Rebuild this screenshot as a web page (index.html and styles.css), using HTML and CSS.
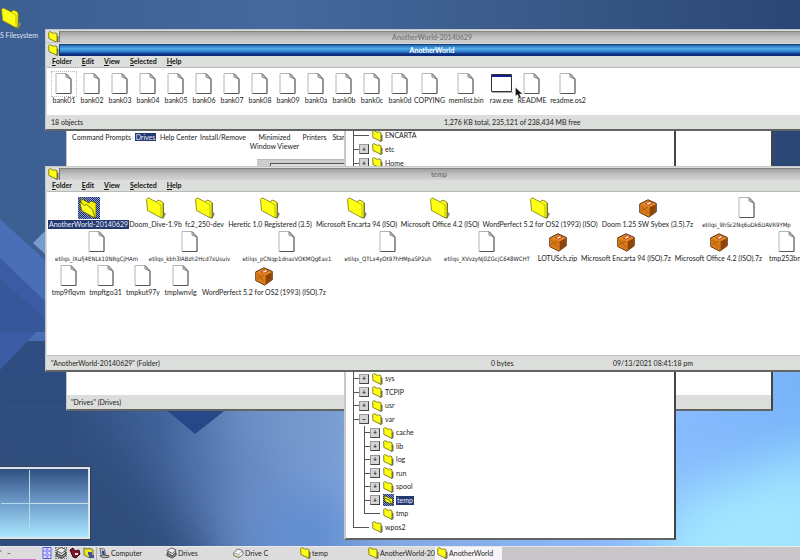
FILE: index.html
```html
<!DOCTYPE html>
<html lang="en">
<head>
<meta charset="utf-8">
<title>Desktop</title>
<link rel="stylesheet" href="styles.css">
</head>
<body>
<svg class="defs" aria-hidden="true">
  <defs>
    <pattern id="hatch" width="2" height="2" patternUnits="userSpaceOnUse"><path fill="#8f9cc8" d="M0 0h2v2H0z"/><path fill="#1c2f74" d="M0 0h1v1H0zM1 1h1v1H1z"/></pattern>
    <symbol id="folder" viewBox="0 0 22 22">
      <path fill="#8c8c86" d="M17 13l4 4-3 5-5-3z"/>
      <path fill="#77773a" d="M16 5l3 1v15l-3-1z"/>
      <path fill="#ffff14" stroke="#77771c" stroke-width=".8" d="M1.500 2.500L3 .8l8.500 4.200 1.500-2 4 1.500 1 2V20l-2 .8L2.500 13.500z"/>
      <path fill="none" stroke="#a2a200" stroke-width=".7" d="M11.500 5.500l4.500 2.300V20"/>
    </symbol>
    <symbol id="folder-open" viewBox="0 0 22 22">
      <path fill="url(#hatch)" d="M0 0h22v22H0z"/>
      <path fill="#f4f400" stroke="#55551c" stroke-width=".8" d="M3 1.500l8 4.500 2-2 5 2v14l-2 1L3 13z"/>
      <path fill="#ffff20" stroke="#55551c" stroke-width=".8" d="M1.500 4.500l5 4 2-1 6 5 2.500 8.500-13-7z"/>
    </symbol>
    <symbol id="file" viewBox="0 0 17 22">
      <path fill="#fff" stroke="#b4b4b4" d="M.5.5h10l5 5v15H.5z"/>
      <path fill="none" stroke="#555" d="M10.500.5l5 5.500v14.500H1"/>
      <path fill="#ddd" stroke="#888" d="M10.500 1v3l4.500 2z"/>
    </symbol>
    <symbol id="box" viewBox="-2 -2 24 24">
      <path fill="#e08a24" stroke="#4c2408" d="M1 5.500L10 1l9 4v9l-8 6-10-5z"/>
      <path fill="#8e4308" d="M11.500 9.500L18.500 6v8l-7 5z"/>
      <path fill="#d87a18" d="M1.500 6l10 3.500v10l-10-5z"/>
      <path fill="none" stroke="#9a5010" stroke-width=".7" d="M2 13l8-4M3 8l7 8M12 15l6-5"/>
      <path fill="#fff0cc" stroke="#c23818" d="M7 5.500l5-2.500 3 1.500-5 2.500z"/>
    </symbol>
    <symbol id="program" viewBox="0 0 22 20">
      <path fill="#fff" stroke="#333" d="M.5.5h20v17H.5z"/>
      <path fill="#141c98" d="M1 1h19v2H1z"/>
      <path fill="#aaa" d="M1 18h21v1H1z"/>
    </symbol>
    <symbol id="mini" viewBox="0 0 11 12">
      <path fill="#77776a" d="M8 4l2.500 1v6l-2 1-2-2z"/>
      <path fill="#ffff10" stroke="#66661c" stroke-width=".8" d="M.7 1.500l1-1 4 2 1-.7 2.300 1v8.500L.9 7.500z"/>
    </symbol>
    <symbol id="mini-open" viewBox="0 0 11 12">
      <path fill="url(#hatch)" d="M0 0h11v12H0z"/>
      <path fill="#ffff10" stroke="#44441c" stroke-width=".8" d="M1 3l1.500-1 4 2 3 .5v6L2 7.500zM2 4l5 2.500 2 4"/>
    </symbol>
    <symbol id="disk" viewBox="0 0 12 12">
      <path fill="#888" stroke="#444" d="M1 7v2l6 2.500 4-3V6z"/>
      <path fill="#ddd" stroke="#444" d="M1 6l5-3 5 2-4 4z"/>
      <path fill="#eee" stroke="#555" d="M1 3.500l5-3 5 2-4 4z"/>
    </symbol>
    <symbol id="drive" viewBox="0 0 12 12">
      <path fill="#eee" stroke="#666" d="M.7 6L5 1.500 10 3l1.300 4L7 11 1 9z"/>
      <path fill="#fff" stroke="#999" d="M1 6l5 1.500L10 3M6 7.500L7 11"/>
      <path fill="#d6d630" d="M2 8l3 1v1l-3-1z"/>
    </symbol>
    <symbol id="computer" viewBox="0 0 12 12">
      <path fill="#eee" stroke="#555" d="M1 1l5 1 1 6-5-1z"/>
      <path fill="#263c9a" d="M3 3l3 1v4L3 6z"/>
      <path fill="#bbb" stroke="#444" d="M1 9l3-1 7 1-1 2H4z"/>
    </symbol>
    <symbol id="drawers" viewBox="0 0 9 12">
      <path fill="#eef" stroke="#5555e8" d="M.5.5h8v11h-8zM1 4h7M1 8h7M3 2h3M3 6h3M3 10h3"/>
    </symbol>
    <symbol id="bug" viewBox="0 0 12 12">
      <path fill="#8c1226" stroke="#301018" d="M1 3l3-2 2 3 4-1 1 4-4 4-3-1z"/>
      <path fill="#eee" d="M6 6h3v2H6z"/>
    </symbol>
    <symbol id="shared" viewBox="0 0 12 12">
      <path fill="#e8e820" stroke="#55551c" stroke-width=".8" d="M1 1l4 1 1-1 4 2v7l-3 1-6-3z"/>
      <path fill="#4a4e9c" d="M5 5h4v3H5zM6 8h5v3H6z"/>
    </symbol>
  </defs>
</svg>

<main class="desktop">
  <svg class="wallpaper" viewBox="0 0 800 560" preserveAspectRatio="none" aria-hidden="true">
    <defs>
      <linearGradient id="sky" x1="0" y1="0" x2="1" y2="0"><stop offset="0" stop-color="#3c5f92"/><stop offset=".35" stop-color="#44699e"/><stop offset=".7" stop-color="#385887"/><stop offset="1" stop-color="#2a4674"/></linearGradient>
      <linearGradient id="floor" x1="0" y1="0" x2="1" y2="0"><stop offset=".08" stop-color="#2f4d80"/><stop offset=".2" stop-color="#41639a"/><stop offset=".3" stop-color="#6485be"/><stop offset=".43" stop-color="#7fa4dc"/><stop offset=".8" stop-color="#8dbcff"/><stop offset="1" stop-color="#78b4fa"/></linearGradient>
      <filter id="soft" x="-50%" y="-50%" width="200%" height="200%"><feGaussianBlur stdDeviation="26"/></filter>
    </defs>
    <path fill="url(#sky)" d="M0 0h800v300H0z"/>
    <path fill="url(#floor)" d="M0 290h800v270H0z"/>
    <g filter="url(#soft)">
      <path fill="#2f4d7c" d="M-40 440h150l130 160H-40z"/>
      <path fill="#7697cb" d="M210 400h130v70z"/>
      <path fill="#5d8cd2" d="M270 500h80v70H250z"/>
      <path fill="#a2e6ff" d="M670 500l170-60v160H640z"/>
    </g>
    <path fill="#4a6fb6" d="M0 219l46 42v80H0z"/>
    <path fill="#3b5ba4" d="M0 258l46 44v20L0 370z"/>
    <path fill="#36589a" d="M0 278l46 42v12H0z"/>
    <path fill="#789bd2" d="M33 243l13-13v25z"/>
    <path fill="#264788" d="M164 408h64l-33 26z"/>
  </svg>

  <div class="desk-icon"><svg><use href="#folder"/></svg><span>S Filesystem</span></div>

  <section class="window drives">
    <div class="items drive-items">
      <span>Command Prompts</span><span><b class="picked">Drives</b></span><span>Help Center</span><span>Install/Remove</span><span>Minimized<br>Window Viewer</span><span>Printers</span><span>Star</span>
    </div>
    <div class="viewer"><i></i></div>
    <footer class="status">"Drives" (Drives)</footer>
  </section>

  <section class="window tree">
    <ul>
      <li><i class="rail long"></i><svg><use href="#mini"/></svg><span>ENCARTA</span></li>
      <li><i class="rail"></i><button aria-label="Expand etc">+</button><svg><use href="#mini"/></svg><span>etc</span></li>
      <li><i class="rail"></i><button aria-label="Expand Home">+</button><svg><use href="#mini"/></svg><span>Home</span></li>
    </ul>
    <div class="trunk"></div>
    <ul class="lower">
      <li><i class="rail"></i><button aria-label="Expand sys">+</button><svg><use href="#mini"/></svg><span>sys</span></li>
      <li><i class="rail"></i><button aria-label="Expand TCPIP">+</button><svg><use href="#mini"/></svg><span>TCPIP</span></li>
      <li><i class="rail"></i><button aria-label="Expand usr">+</button><svg><use href="#mini"/></svg><span>usr</span></li>
      <li><i class="rail"></i><button aria-label="Collapse var">−</button><svg><use href="#mini"/></svg><span>var</span></li>
      <li><i class="rail pass"></i><i class="rail"></i><button aria-label="Expand cache">+</button><svg><use href="#mini"/></svg><span>cache</span></li>
      <li><i class="rail pass"></i><i class="rail"></i><button aria-label="Expand lib">+</button><svg><use href="#mini"/></svg><span>lib</span></li>
      <li><i class="rail pass"></i><i class="rail"></i><button aria-label="Expand log">+</button><svg><use href="#mini"/></svg><span>log</span></li>
      <li><i class="rail pass"></i><i class="rail"></i><button aria-label="Expand run">+</button><svg><use href="#mini"/></svg><span>run</span></li>
      <li><i class="rail pass"></i><i class="rail"></i><button aria-label="Expand spool">+</button><svg><use href="#mini"/></svg><span>spool</span></li>
      <li><i class="rail pass"></i><i class="rail"></i><button aria-label="Expand temp">+</button><svg><use href="#mini-open"/></svg><span class="picked">temp</span></li>
      <li><i class="rail pass"></i><i class="rail long last"></i><svg><use href="#mini"/></svg><span>tmp</span></li>
      <li><i class="rail long last"></i><svg><use href="#mini"/></svg><span>wpos2</span></li>
    </ul>
  </section>

  <section class="window behind">
    <header class="title"><svg><use href="#mini"/></svg><h2>AnotherWorld-20140629</h2></header>
  </section>

  <section class="window world">
    <header class="title active"><svg><use href="#mini"/></svg><h2>AnotherWorld</h2></header>
    <nav class="menu"><button><u>F</u>older</button><button><u>E</u>dit</button><button><u>V</u>iew</button><button><u>S</u>elected</button><button><u>H</u>elp</button></nav>
    <div class="content">
      <div class="items world-items">
        <figure class="focused"><svg><use href="#file"/></svg><figcaption>bank01</figcaption></figure>
        <figure><svg><use href="#file"/></svg><figcaption>bank02</figcaption></figure>
        <figure><svg><use href="#file"/></svg><figcaption>bank03</figcaption></figure>
        <figure><svg><use href="#file"/></svg><figcaption>bank04</figcaption></figure>
        <figure><svg><use href="#file"/></svg><figcaption>bank05</figcaption></figure>
        <figure><svg><use href="#file"/></svg><figcaption>bank06</figcaption></figure>
        <figure><svg><use href="#file"/></svg><figcaption>bank07</figcaption></figure>
        <figure><svg><use href="#file"/></svg><figcaption>bank08</figcaption></figure>
        <figure><svg><use href="#file"/></svg><figcaption>bank09</figcaption></figure>
        <figure><svg><use href="#file"/></svg><figcaption>bank0a</figcaption></figure>
        <figure><svg><use href="#file"/></svg><figcaption>bank0b</figcaption></figure>
        <figure><svg><use href="#file"/></svg><figcaption>bank0c</figcaption></figure>
        <figure><svg><use href="#file"/></svg><figcaption>bank0d</figcaption></figure>
        <figure><svg><use href="#file"/></svg><figcaption>COPYING</figcaption></figure>
        <figure><svg><use href="#file"/></svg><figcaption>memlist.bin</figcaption></figure>
        <figure><svg><use href="#program"/></svg><figcaption>raw.exe</figcaption></figure>
        <figure><svg><use href="#file"/></svg><figcaption>README</figcaption></figure>
        <figure><svg><use href="#file"/></svg><figcaption>readme.os2</figcaption></figure>
      </div>
    </div>
    <footer class="status world-status"><span>18 objects</span><span>1,276 KB total, 235,121 of 238,434 MB free</span></footer>
  </section>

  <section class="window temp">
    <header class="title"><svg><use href="#mini"/></svg><h2>temp</h2></header>
    <nav class="menu"><button><u>F</u>older</button><button><u>E</u>dit</button><button><u>V</u>iew</button><button><u>S</u>elected</button><button><u>H</u>elp</button></nav>
    <div class="content">
      <div class="items row-one">
        <figure><svg><use href="#folder-open"/></svg><figcaption class="picked">AnotherWorld-20140629</figcaption></figure>
        <figure><svg><use href="#folder"/></svg><figcaption>Doom_Dive-1.9b</figcaption></figure>
        <figure><svg><use href="#folder"/></svg><figcaption>fc2_250-dev</figcaption></figure>
        <figure><svg><use href="#folder"/></svg><figcaption>Heretic 1.0 Registered (3.5)</figcaption></figure>
        <figure><svg><use href="#folder"/></svg><figcaption>Microsoft Encarta 94 (ISO)</figcaption></figure>
        <figure><svg><use href="#folder"/></svg><figcaption>Microsoft Office 4.2 (ISO)</figcaption></figure>
        <figure><svg><use href="#folder"/></svg><figcaption>WordPerfect 5.2 for OS2 (1993) (ISO)</figcaption></figure>
        <figure><svg><use href="#box"/></svg><figcaption>Doom 1.25 SW Sybex (3.5).7z</figcaption></figure>
        <figure><svg><use href="#file"/></svg><figcaption class="long">etilqs_9hSc2Nq6uDk6UAVR9YMp</figcaption></figure>
      </div>
      <div class="items row-two">
        <figure><svg><use href="#file"/></svg><figcaption class="long">etilqs_IXufj4ENLk10NRgCjHAm</figcaption></figure>
        <figure><svg><use href="#file"/></svg><figcaption class="long">etilqs_kbh3lABzh2Hcd7xUsuiv</figcaption></figure>
        <figure><svg><use href="#file"/></svg><figcaption class="long">etilqs_pCNqp1dnasVOKMQgEav1</figcaption></figure>
        <figure><svg><use href="#file"/></svg><figcaption class="long">etilqs_QTLx4yOt97hHMpaSP2uh</figcaption></figure>
        <figure><svg><use href="#file"/></svg><figcaption class="long">etilqs_XVvzyNj0ZGcjC648WCHT</figcaption></figure>
        <figure><svg><use href="#box"/></svg><figcaption>LOTUSch.zip</figcaption></figure>
        <figure><svg><use href="#box"/></svg><figcaption>Microsoft Encarta 94 (ISO).7z</figcaption></figure>
        <figure><svg><use href="#box"/></svg><figcaption>Microsoft Office 4.2 (ISO).7z</figcaption></figure>
        <figure><svg><use href="#file"/></svg><figcaption>tmp253bnh</figcaption></figure>
      </div>
      <div class="items row-three">
        <figure><svg><use href="#file"/></svg><figcaption>tmp9flqvm</figcaption></figure>
        <figure><svg><use href="#file"/></svg><figcaption>tmpftgo31</figcaption></figure>
        <figure><svg><use href="#file"/></svg><figcaption>tmpkut97y</figcaption></figure>
        <figure><svg><use href="#file"/></svg><figcaption>tmplwnvlg</figcaption></figure>
        <figure><svg><use href="#box"/></svg><figcaption>WordPerfect 5.2 for OS2 (1993) (ISO).7z</figcaption></figure>
      </div>
    </div>
    <footer class="status temp-status"><span>"AnotherWorld-20140629" (Folder)</span><span>0 bytes</span><span>09/13/2021 08:41:18 pm</span></footer>
  </section>

  <div class="pager"><i></i><i></i><i></i><i></i></div>
  <svg class="pointer" viewBox="0 0 8 12"><path fill="#111" stroke="#ddd" stroke-width=".4" d="M.5.5v8.500l2-1.500 2 4 1.500-.7L4.500 7h3z"/></svg>
</main>

<footer class="taskbar">
  <div class="stub">' &nbsp;&nbsp;–</div>
  <div class="tray"><svg><use href="#drawers"/></svg><svg class="lit"><use href="#disk"/></svg><svg><use href="#bug"/></svg><svg><use href="#shared"/></svg></div>
  <div class="tasks">
    <button><svg><use href="#computer"/></svg><span>Computer</span></button>
    <button><svg><use href="#disk"/></svg><span>Drives</span></button>
    <button><svg><use href="#drive"/></svg><span>Drive C</span></button>
    <button><svg><use href="#mini"/></svg><span>temp</span></button>
    <button><svg><use href="#mini"/></svg><span>AnotherWorld-201</span></button>
    <button class="current"><svg><use href="#mini"/></svg><span>AnotherWorld</span></button>
  </div>
</footer>
</body>
</html>
```
FILE: styles.css
```css
* { box-sizing: border-box; }

body {
  margin: 0;
  height: 100vh;
  display: flex;
  flex-direction: column;
  overflow: hidden;
  font: 7px/9px Lato, "Liberation Sans", sans-serif;
  color: #222;
}

button { font: inherit; color: inherit; border: 0; padding: 0; background: none; }
h2, figure, ul { margin: 0; padding: 0; }
i { display: block; }
.defs { position: absolute; width: 0; height: 0; }

.desktop { position: relative; flex: 1; overflow: hidden; }
.wallpaper { position: absolute; left: 0; top: 0; width: 100%; height: 100vh; }

.desk-icon {
  position: absolute;
  left: 0;
  top: 7px;
  display: flex;
  flex-direction: column;
  gap: 2px;
  color: #dfe6f2;
  white-space: nowrap;
}
.desk-icon svg { width: 22px; height: 22px; }

.window {
  position: absolute;
  display: flex;
  flex-direction: column;
  background: #dcdedc;
  border: 1px solid #c4c6c4;
  border-bottom: 2px solid #626462;
  border-right-color: #555;
  padding: 1px 0 0 1px;
  white-space: nowrap;
}

.drives { left: 66px; right: 27px; top: 118px; bottom: 135px; background: #fff; border-right: 2px solid #444; padding: 0; }
.tree { left: 344px; right: 124px; top: 128px; bottom: 6px; background: #fff; border-left: 2px solid #c8c8c8; border-right: 2px solid #444; padding: 0 0 4px 7px; }
.behind { left: 45px; right: -5px; top: 29px; height: 20px; }
.world { left: 45px; right: -5px; top: 42px; }
.temp { left: 45px; right: -19px; top: 166px; }

.title { display: flex; height: 12px; padding-left: 1px; }
.title svg { width: 11px; height: 12px; }
.title h2 {
  flex: 1;
  font-size: 7px;
  line-height: 11px;
  text-align: center;
  color: #7c7c7c;
  background: linear-gradient(#a0a0a0, #c2c2c2 50%, #d4d4d4);
  border-top: 1px solid #858585;
  border-left: 1px solid #777;
}
.title.active h2 {
  color: #fff;
  background: linear-gradient(#2268b0, #52adeb 35%, #2c7cca 60%, #0c2b7c 85%);
  border-color: #16407a;
}

.menu { display: flex; gap: 10px; height: 12px; padding-left: 5px; border-bottom: 1px solid #b8bab8; font-weight: bold; color: #111; }

.content { background: #fff; padding: 5px 0 0 2px; }
.world .content { height: 47px; padding-left: 3px; }
.temp .content { height: 164px; border-bottom: 1px solid #c0c0c0; }
.items { display: grid; text-align: center; }
.world-items { grid-template-columns: repeat(13, 28px) 31px 42px 29px 32px 40px; }
.row-one { grid-template-columns: 79px 55px 43px 88px 85px 82px 118px 97px 101px; }
.row-two { grid-template-columns: 93px 93px 102px 100px 98px 43px 94px 91px 46px; padding-left: 1px; }
.row-three { grid-template-columns: 37px 37px 38px 37px 130px; padding-left: 1px; }
.temp .items { height: 34px; }

figure { display: flex; flex-direction: column; align-items: center; gap: 1px; }
figure svg { width: 22px; height: 22px; }
.focused svg { outline: 1px dotted #bbb; outline-offset: 1px; }
.long { font-family: "DejaVu Sans Condensed", "DejaVu Sans", sans-serif; font-size: 6px; }
.picked { background: #22386e; color: #eef; font-weight: normal; padding: 0 1px; }

.status { height: 14px; line-height: 14px; padding-left: 4px; background: #dcdedc; }
.world-status { display: grid; grid-template-columns: 393px 1fr; }
.temp-status { display: grid; grid-template-columns: 440px 122px 1fr; }
.drives .status { margin-top: auto; }

.drive-items { grid-template-columns: 61px 27px 39px 50px 53px 27px 21px; padding: 14px 0 0 4px; }
.viewer { margin: 8px 400px 0 190px; height: 20px; background: #ccc; border-top: 1px solid #bbb; padding: 3px 0 0 13px; }
.viewer i { height: 12px; border: 1px solid #555; background: #ddd; }

.tree ul { list-style: none; display: grid; grid-auto-rows: 1fr; height: 41px; }
.tree .lower { height: 162px; }
.trunk { flex: 1; border-left: 1px solid #555; }
.tree li { display: flex; align-items: center; }
.rail {
  width: 6px;
  align-self: stretch;
  background: linear-gradient(#555, #555) 0 0 / 1px 100% no-repeat, linear-gradient(#555, #555) 0 50% / 100% 1px no-repeat;
}
.rail.long { width: 16px; font-size: inherit; }
.rail.pass { width: 11px; background: linear-gradient(#555, #555) 0 0 / 1px 100% no-repeat; }
.rail.last { background-size: 1px 50%, 100% 1px; }
.tree button { width: 10px; height: 10px; line-height: 7px; font-weight: bold; text-align: center; background: #d4d4d4; border: 1px solid #999; border-right-color: #444; border-bottom-color: #444; }
.tree svg { width: 11px; height: 12px; margin: 0 2px 0 3px; }

.pager {
  position: absolute;
  left: -2px;
  bottom: 7px;
  width: 92px;
  height: 72px;
  display: grid;
  grid-template-columns: 29px 1fr;
  grid-template-rows: 1fr 1fr;
  gap: 1px;
  border: 2px solid #dce4ea;
  outline: 1px solid #35435a;
  background: linear-gradient(#305080, #6f9cca 50%, #a8e8ff);
}
.pager i:nth-child(odd) { box-shadow: 1px 0 #b0dbea; }
.pager i:nth-child(-n+2) { box-shadow: 1px 1px #b0dbea; }
.pager i:nth-child(2) { box-shadow: 0 1px #c8dbe8; }

.pointer { position: absolute; left: 515px; top: 87px; width: 8px; height: 12px; }

.taskbar { position: relative; display: flex; height: 14px; background: #c8c6c8; border-top: 1px solid #e8e8e8; line-height: 13px; white-space: nowrap; }
.stub { width: 36px; background: #dcdcdc; border-bottom: 1px solid #d070d0; }
.tray { display: flex; gap: 2px; width: 61px; padding-left: 5px; background: #dcdcdc; border-right: 1px solid #aaa; }
.tray svg { width: 12px; height: 12px; }
.tray .lit { outline: 1px dotted #777; outline-offset: -1px; }
.tasks { display: grid; grid-template-columns: repeat(3, 67px) 68px 69px 67px; }
.tasks button { display: flex; gap: 1px; padding-left: 2px; background: #dcdcdc; }
.tasks svg { flex: none; width: 11px; height: 12px; }
.tasks .current { background: #f6f4f6; }
```
